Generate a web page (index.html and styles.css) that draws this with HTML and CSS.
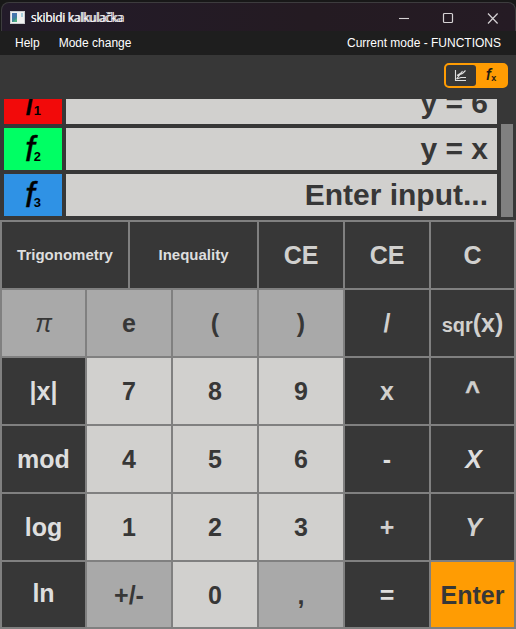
FILE: index.html
```html
<!DOCTYPE html>
<html lang="en">
<head>
<meta charset="utf-8">
<title>skibidi kalkulačka</title>
<link rel="stylesheet" href="styles.css">
</head>
<body>
<div class="window">
  <header class="titlebar">
    <svg class="app-icon" width="15" height="13" viewBox="0 0 15 13">
      <rect width="15" height="13" fill="#c9cbce"/>
      <rect x="1" y="1" width="13" height="11" fill="#f1f1f1"/>
      <rect x="2" y="2" width="5" height="9" fill="#3f8796"/>
      <path d="M2 2h5v3L2 8z" fill="#4777ad"/>
      <path d="M3 11l4-4v4z" fill="#4fae83"/>
      <rect x="11" y="2" width="2" height="4" fill="#a9cfdd"/>
    </svg>
    <span class="title">skibidi kalkulačka</span>
    <svg class="controls" width="104" height="14" viewBox="0 0 104 14" fill="none" stroke="#d5d2d4">
      <path d="M0 7.500h10" stroke-width="1.1"/>
      <rect x="44.500" y="2.500" width="9" height="9" rx="1" stroke-width="1.200"/>
      <path d="M89 2.500l9.600 10M98.600 2.500l-9.600 10" stroke-width="1.200"/>
    </svg>
  </header>
  <nav class="menubar">
    <span class="menu-item">Help</span>
    <span class="menu-item">Mode change</span>
    <span class="mode">Current mode - FUNCTIONS</span>
  </nav>
  <div class="toolbar">
    <div class="switch">
      <div class="switch-graph">
        <svg width="14" height="13" viewBox="0 0 14 13" fill="none" stroke="#dedede" stroke-width="1.100">
          <path d="M1.500 1v10.500H12"/>
          <path d="M2.500 10L6 5.500l2.500-1L11.500 1.500M2.500 10L7 8.500h5M3 6.500l4-2.500L8.500 2"/>
        </svg>
      </div>
      <div class="switch-fx"><i>f</i><sub>x</sub></div>
    </div>
  </div>
  <section class="functions">
    <div class="list">
      <div class="row"><div class="label red"><i>f</i><b>1</b></div><div class="input">y = 6</div></div>
      <div class="row"><div class="label green"><i>f</i><b>2</b></div><div class="input">y = x</div></div>
      <div class="row"><div class="label blue"><i>f</i><b>3</b></div><div class="input">Enter input...</div></div>
    </div>
    <div class="scrollbar"></div>
  </section>
  <main class="keypad">
    <div class="top-keys">
      <div class="key dark small">Trigonometry</div>
      <div class="key dark small">Inequality</div>
      <div class="key dark dim">CE</div>
      <div class="key dark dim">CE</div>
      <div class="key dark dim">C</div>
    </div>
    <div class="keys">
      <div class="key mid pi">π</div>
      <div class="key mid">e</div>
      <div class="key mid">(</div>
      <div class="key mid">)</div>
      <div class="key dark dim">/</div>
      <div class="key dark dim root"><span><span class="sqr">sqr</span>(x)</span></div>

      <div class="key dark">|x|</div>
      <div class="key light">7</div>
      <div class="key light">8</div>
      <div class="key light">9</div>
      <div class="key dark dim">x</div>
      <div class="key dark dim caret">^</div>

      <div class="key dark">mod</div>
      <div class="key light">4</div>
      <div class="key light">5</div>
      <div class="key light">6</div>
      <div class="key dark">-</div>
      <div class="key dark var">X</div>

      <div class="key dark">log</div>
      <div class="key light">1</div>
      <div class="key light">2</div>
      <div class="key light">3</div>
      <div class="key dark dim">+</div>
      <div class="key dark dim var">Y</div>

      <div class="key dark ln">ln</div>
      <div class="key mid">+/-</div>
      <div class="key light">0</div>
      <div class="key mid">,</div>
      <div class="key dark">=</div>
      <div class="key enter">Enter</div>
    </div>
  </main>
</div>
</body>
</html>
```

FILE: styles.css
```css
* { box-sizing: border-box; }
body {
  margin: 0;
  background: #181818;
  font-family: "Liberation Sans", Arial, sans-serif;
}
.window {
  display: flex;
  flex-direction: column;
  width: 516px;
  height: 629px;
  padding-top: 2px;
  background: #181818;
  overflow: hidden;
}
.titlebar {
  display: flex;
  align-items: center;
  height: 29px;
  margin: 0 0 0 1px;
  padding: 2px 20px 0 9px;
  border: 1px solid #3d3c3e;
  border-bottom: 0;
  border-radius: 8px 8px 0 0;
  background: linear-gradient(90deg, #231b2a, #241b22 60%, #251b24);
}
.app-icon { margin-left: -1px; margin-top: -2px; }
.title {
  position: relative;
  margin-left: 6px;
  color: #f0eef0;
  font: 12px/16px "Open Sans", sans-serif;
  letter-spacing: -0.3px;
  white-space: nowrap;
}
.title::after {
  content: "skibidi kalkulačka";
  position: absolute;
  left: 0;
  top: 0;
  letter-spacing: -0.2px;
}
.controls { margin: -1px -8px 0 auto; }
.menubar {
  display: flex;
  align-items: center;
  height: 24px;
  padding: 0 15px;
  gap: 19px;
  background: #1e1e1e;
  color: #fff;
  font: 12px/24px "Liberation Sans", Arial, sans-serif;
}
.mode { margin-left: auto; }
.toolbar {
  display: flex;
  justify-content: flex-end;
  height: 44px;
  padding: 8px 8px 0 0;
  background: #373737;
}
.switch {
  display: flex;
  width: 64px;
  height: 25px;
  border: 2px solid #ff9c03;
  border-radius: 5px;
  background: #ff9c03;
}
.switch-graph {
  display: flex;
  align-items: center;
  justify-content: center;
  width: 30px;
  border-radius: 3px;
  background: #373737;
}
.switch-fx {
  flex: 1;
  color: #1e1a12;
  text-align: center;
  font: 500 16px/20px Roboto, sans-serif;
}
.switch-fx sub { font: bold 9px/0 "Liberation Sans", sans-serif; vertical-align: -1px; }
.functions {
  display: flex;
  height: 121px;
  padding: 0 3px 0 4px;
  gap: 4px;
  background: #373737;
}
.list {
  display: flex;
  flex-direction: column;
  justify-content: flex-end;
  gap: 4px;
  width: 493px;
  height: 117px;
  overflow: hidden;
}
.row { display: flex; flex: none; gap: 4px; height: 42px; }
.label {
  width: 58px;
  color: #000;
  text-align: center;
  font-size: 35px;
  line-height: 42px;
}
.label i { margin-right: -1px; -webkit-text-stroke: 0.4px #000; }
.label b { font-size: 13px; }
.red { background: #f20a0a; }
.green { background: #00ff64; }
.blue { background: #2f92e5; }
.input {
  flex: 1;
  padding-right: 9px;
  background: #d1d0ce;
  color: #373737;
  text-align: right;
  font-weight: bold;
  font-size: 30px;
  line-height: 42px;
}
.scrollbar { width: 12px; height: 93px; margin-top: 25px; background: #808080; }
.keypad {
  display: flex;
  flex-direction: column;
  gap: 2px;
  height: 409px;
  padding: 2px;
  background: #808080;
}
.top-keys {
  display: grid;
  grid-template-columns: 126px 127px 84px 84px 83px;
  gap: 2px;
  height: 66px;
}
.keys {
  display: grid;
  grid-template-columns: 83px repeat(4, 84px) 83px;
  grid-template-rows: repeat(4, 66px) 65px;
  gap: 2px;
}
.key {
  display: flex;
  align-items: center;
  justify-content: center;
  font-weight: bold;
  font-size: 25px;
  line-height: 28px;
}
.dark { background: #373737; color: #dedede; }
.dim { color: #d1d0ce; }
.mid { background: #a9a9a9; color: #373737; }
.light { background: #d1d0ce; color: #373737; }
.enter { background: #ff9c03; color: #373737; }
.small { font-size: 15px; }
.root { padding-top: 2px; }
.sqr { font-size: 20px; }
.var { font-style: italic; padding-left: 2px; }
.caret { -webkit-text-stroke: 0.5px #d1d0ce; }
.pi { font-weight: normal; font-style: italic; }
.ln { padding-bottom: 4px; }
```
